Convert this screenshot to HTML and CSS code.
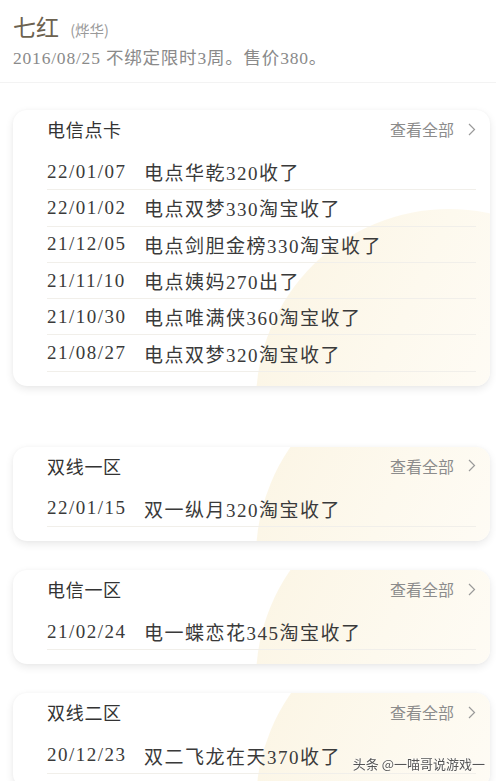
FILE: index.html
```html
<!DOCTYPE html>
<html lang="zh-CN">
<head>
  <meta charset="UTF-8" />
  <meta name="viewport" content="width=device-width, initial-scale=1.0" />
  <title>七红</title>
  <link rel="stylesheet" href="styles.css">
</head>
<body>
  <!-- 顶部信息 -->
  <div class="intro">
    <div class="title">七红 <span class="alias">(烨华)</span></div>
    <div class="sub">2016/08/25 不绑定限时3周。售价380。</div>
  </div>

  <!-- 电信点卡 -->
  <div class="card first">
    <div class="card-head">
      <span class="zone">电信点卡</span>
      <span class="more">查看全部 <svg width="8" height="13" viewBox="0 0 8 13"><path d="M1 1l5.5 5.5L1 12" fill="none" stroke="#9a9a9a" stroke-width="1.2"/></svg></span>
    </div>
    <div class="row"><span class="date">22/01/07</span><span class="what">电点华乾320收了</span></div>
    <div class="row"><span class="date">22/01/02</span><span class="what">电点双梦330淘宝收了</span></div>
    <div class="row"><span class="date">21/12/05</span><span class="what">电点剑胆金榜330淘宝收了</span></div>
    <div class="row"><span class="date">21/11/10</span><span class="what">电点姨妈270出了</span></div>
    <div class="row"><span class="date">21/10/30</span><span class="what">电点唯满侠360淘宝收了</span></div>
    <div class="row"><span class="date">21/08/27</span><span class="what">电点双梦320淘宝收了</span></div>
  </div>

  <!-- 双线一区 -->
  <div class="card">
    <div class="card-head">
      <span class="zone">双线一区</span>
      <span class="more">查看全部 <svg width="8" height="13" viewBox="0 0 8 13"><path d="M1 1l5.5 5.5L1 12" fill="none" stroke="#9a9a9a" stroke-width="1.2"/></svg></span>
    </div>
    <div class="row"><span class="date">22/01/15</span><span class="what">双一纵月320淘宝收了</span></div>
  </div>

  <!-- 电信一区 -->
  <div class="card">
    <div class="card-head">
      <span class="zone">电信一区</span>
      <span class="more">查看全部 <svg width="8" height="13" viewBox="0 0 8 13"><path d="M1 1l5.5 5.5L1 12" fill="none" stroke="#9a9a9a" stroke-width="1.2"/></svg></span>
    </div>
    <div class="row"><span class="date">21/02/24</span><span class="what">电一蝶恋花345淘宝收了</span></div>
  </div>

  <!-- 双线二区 -->
  <div class="card">
    <div class="card-head">
      <span class="zone">双线二区</span>
      <span class="more">查看全部 <svg width="8" height="13" viewBox="0 0 8 13"><path d="M1 1l5.5 5.5L1 12" fill="none" stroke="#9a9a9a" stroke-width="1.2"/></svg></span>
    </div>
    <div class="row"><span class="date">20/12/23</span><span class="what">双二飞龙在天370收了</span></div>
  </div>

  <div class="mark">头条 @一喵哥说游戏一</div>
</body>
</html>
```

FILE: styles.css
```css
body {
  margin: 0;
  background: #fff;
  font-family: "Liberation Serif", "Noto Sans CJK SC", serif;
  color: #333;
}

.intro {
  padding: 11px 13px 12px;
  border-bottom: 1px solid #f3f3f3;
}
.title {
  font-family: "Noto Sans CJK SC", sans-serif;
  font-size: 23px;
  line-height: 30px;
  color: #6c6250;
}
.alias {
  font-size: 14.5px;
  color: #9a9a9a;
  margin-left: 6px;
}
.sub {
  margin-top: 1px;
  font-size: 17.5px;
  line-height: 24px;
  color: #8a8a8a;
  letter-spacing: 0.8px;
}

.card {
  position: relative;
  overflow: hidden;
  margin: 29px 6px 0 13px;
  padding: 0 14px 14px 34px;
  border-radius: 14px;
  background: #fff;
  box-shadow: 0 3px 8px rgba(0, 0, 0, 0.09), 0 0 3px rgba(0, 0, 0, 0.03);
}
.card.first { margin-top: 27px; margin-bottom: 61px; }
.card.first + .card { margin-top: 0; }
.card::before {
  content: "";
  position: absolute;
  left: 243px;
  bottom: -209px;
  width: 386px;
  height: 386px;
  border-radius: 50%;
  background: linear-gradient(115deg, #fbf4e2 0%, #fdf9ee 35%, #fffdf9 70%, #fff 90%);
}

.card-head {
  position: relative;
  display: flex;
  justify-content: space-between;
  align-items: center;
  height: 38px;
  margin-bottom: 6px;
}
.zone {
  font-family: "Noto Sans CJK SC", sans-serif;
  font-size: 18px;
  letter-spacing: 0.7px;
  color: #333;
}
.more {
  display: flex;
  align-items: center;
  gap: 14px;
  font-family: "Noto Sans CJK SC", sans-serif;
  font-size: 16px;
  color: #8c8c8c;
}

.row {
  position: relative;
  display: flex;
  height: 35.3px;
  align-items: center;
  border-bottom: 1px solid #f1efea;
  font-size: 19px;
  letter-spacing: 1.5px;
  color: #3a3a3a;
}
.date { width: 97px; flex: none; }

.mark {
  position: fixed;
  right: 11px;
  top: 754px;
  font-family: "Noto Sans CJK SC", sans-serif;
  font-size: 13px;
  color: #555;
  text-shadow: 0 0 2px #fff, 0 0 2px #fff;
}
```
